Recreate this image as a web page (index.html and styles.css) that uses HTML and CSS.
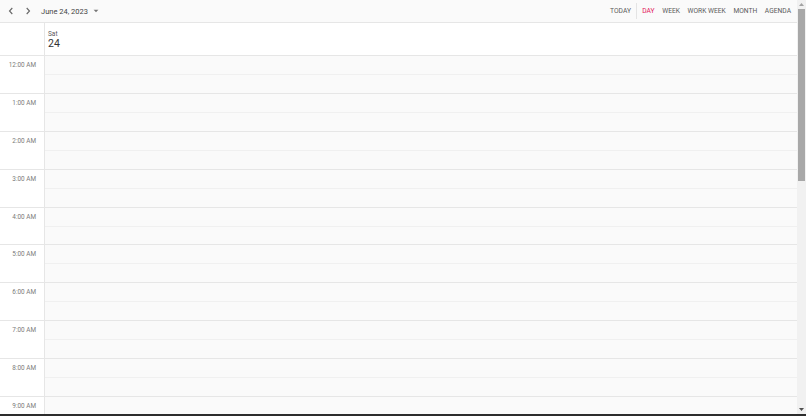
FILE: index.html
```html
<!DOCTYPE html>
<html lang="en">
<head>
<meta charset="utf-8">
<title>Scheduler</title>
<link rel="stylesheet" href="styles.css">
</head>
<body>
<div class="app">
  <div class="frame">
    <div class="main">
      <div class="toolbar">
        <div class="tb-left">
          <button class="nav" aria-label="Previous">
            <svg width="8" height="8" viewBox="0 0 8 8"><path d="M5.3 1 L2.5 4 L5.3 7" fill="none" stroke="#666" stroke-width="1.1"/></svg>
          </button>
          <button class="nav" aria-label="Next">
            <svg width="8" height="8" viewBox="0 0 8 8"><path d="M2.7 1 L5.5 4 L2.7 7" fill="none" stroke="#666" stroke-width="1.1"/></svg>
          </button>
          <button class="date-btn">June 24, 2023
            <svg class="caret" width="6" height="4" viewBox="0 0 6 4"><path d="M0.6 0.8 L5.4 0.8 L3 3.3 Z" fill="#777"/></svg>
          </button>
        </div>
        <div class="tb-right">
          <span class="tb-item">TODAY</span>
          <span class="sep"></span>
          <span class="tb-item active">DAY</span>
          <span class="tb-item">WEEK</span>
          <span class="tb-item">WORK WEEK</span>
          <span class="tb-item">MONTH</span>
          <span class="tb-item">AGENDA</span>
        </div>
      </div>
      <div class="date-header">
        <div class="corner"></div>
        <div class="day-head">
          <span class="dname">Sat</span>
          <span class="dnum">24</span>
        </div>
      </div>
      <div class="grid">
        <div class="hour"><div class="time">12:00 AM</div><div class="cells"><div class="slot"></div><div class="slot"></div></div></div>
        <div class="hour"><div class="time">1:00 AM</div><div class="cells"><div class="slot"></div><div class="slot"></div></div></div>
        <div class="hour"><div class="time">2:00 AM</div><div class="cells"><div class="slot"></div><div class="slot"></div></div></div>
        <div class="hour"><div class="time">3:00 AM</div><div class="cells"><div class="slot"></div><div class="slot"></div></div></div>
        <div class="hour"><div class="time">4:00 AM</div><div class="cells"><div class="slot"></div><div class="slot"></div></div></div>
        <div class="hour"><div class="time">5:00 AM</div><div class="cells"><div class="slot"></div><div class="slot"></div></div></div>
        <div class="hour"><div class="time">6:00 AM</div><div class="cells"><div class="slot"></div><div class="slot"></div></div></div>
        <div class="hour"><div class="time">7:00 AM</div><div class="cells"><div class="slot"></div><div class="slot"></div></div></div>
        <div class="hour"><div class="time">8:00 AM</div><div class="cells"><div class="slot"></div><div class="slot"></div></div></div>
        <div class="hour"><div class="time">9:00 AM</div><div class="cells"><div class="slot"></div><div class="slot"></div></div></div>
      </div>
    </div>
    <div class="vscroll">
      <div class="sb-btn">
        <svg width="5" height="3" viewBox="0 0 5 3"><path d="M0 3 L2.5 0 L5 3 Z" fill="#a3a3a3"/></svg>
      </div>
      <div class="sb-track">
        <div class="sb-thumb"></div>
      </div>
      <div class="sb-btn">
        <svg width="5" height="3" viewBox="0 0 5 3"><path d="M0 0 L5 0 L2.5 3 Z" fill="#505050"/></svg>
      </div>
    </div>
  </div>
  <div class="edge"></div>
</div>
</body>
</html>
```

FILE: styles.css
```css
* { box-sizing: border-box; }
html, body {
  margin: 0;
  padding: 0;
  width: 806px;
  height: 416px;
  overflow: hidden;
  background: #fff;
}
body {
  font-family: Roboto, "Liberation Sans", sans-serif;
  color: #333;
}
.app {
  display: flex;
  flex-direction: column;
  height: 416px;
}
.frame {
  display: flex;
  height: 414px;
}
.main {
  flex: 1;
  min-width: 0;
  overflow: hidden;
}

/* scrollbar */
.vscroll {
  width: 9px;
  background: #f1f1f1;
  display: flex;
  flex-direction: column;
}
.sb-btn {
  height: 9px;
  display: flex;
  align-items: center;
  justify-content: center;
}
.sb-track {
  flex: 1;
  padding: 0 1px;
}
.sb-thumb {
  height: 172px;
  background: #a8a8a8;
}
.edge {
  height: 2px;
  background: #2d2d2d;
}

/* toolbar */
.toolbar {
  height: 23px;
  background: #fafafa;
  border-bottom: 1px solid #e6e6e6;
  display: flex;
  align-items: center;
  justify-content: space-between;
  padding: 0 6px 0 6px;
}
.tb-left {
  display: flex;
  align-items: center;
}
button {
  font: inherit;
  border: 0;
  background: transparent;
  padding: 0;
  margin: 0;
  color: inherit;
}
.nav {
  width: 10px;
  height: 14px;
  display: flex;
  align-items: center;
  justify-content: center;
  margin-right: 7px;
}
.date-btn {
  display: flex;
  align-items: center;
  font-size: 7.5px;
  color: #444;
  margin-left: 1px;
}
.caret { margin-left: 5px; }
.tb-right {
  display: flex;
  align-items: center;
  gap: 7.6px;
  height: 23px;
}
.tb-item {
  font-size: 6.7px;
  font-weight: 400;
  color: #5a5a5a;
}
.tb-item.active { color: #e3165b; }
.sep {
  width: 1px;
  height: 16px;
  background: #e4e4e4;
  margin: 0 -2px 0 -3px;
}

/* date header */
.date-header {
  display: flex;
  height: 33px;
  border-bottom: 1px solid #e6e6e6;
  background: #fff;
}
.corner {
  width: 45px;
  border-right: 1px solid #e6e6e6;
}
.day-head {
  display: flex;
  flex-direction: column;
  padding: 7px 0 0 3px;
}
.dname {
  font-size: 6.5px;
  color: #5a5a5a;
  line-height: 8px;
}
.dnum {
  font-size: 10.5px;
  color: #333;
  line-height: 11px;
}

/* grid */
.hour {
  display: flex;
}
.time {
  width: 45px;
  height: 37.9px;
  border-right: 1px solid #e6e6e6;
  border-bottom: 1px solid #e6e6e6;
  font-size: 6.4px;
  color: #7a7a7a;
  text-align: right;
  padding: 5px 8px 0 0;
}
.cells {
  flex: 1;
  display: flex;
  flex-direction: column;
}
.slot {
  height: 18.95px;
  background: #fafafa;
  border-bottom: 1px solid #f0f0f0;
}
.slot + .slot {
  border-bottom: 1px solid #e6e6e6;
}
```
